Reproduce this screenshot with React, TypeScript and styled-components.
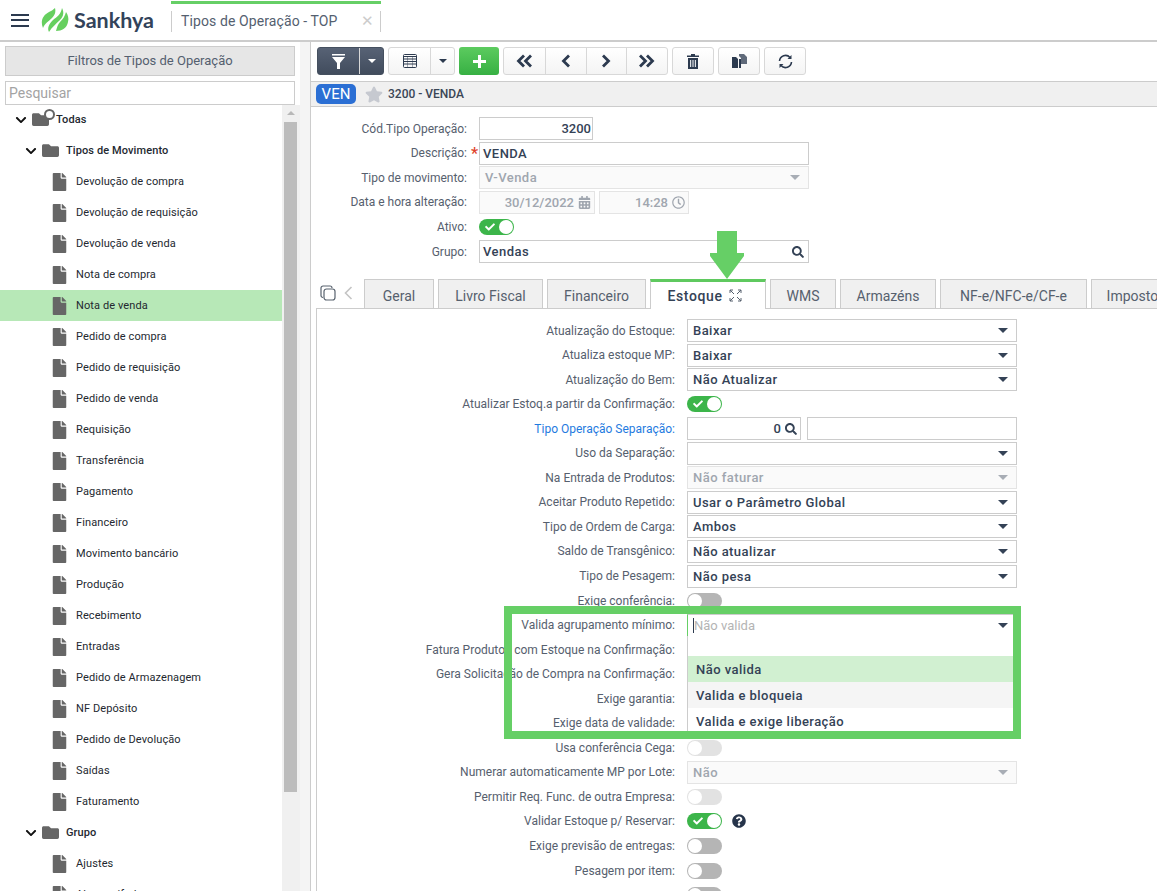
import React from "react";
import styled, { createGlobalStyle } from "styled-components";
import {
  FaCheck,
  FaChevronDown,
  FaFile,
  FaFolder,
  FaQuestionCircle,
  FaSearch,
  FaStar,
  FaCalendarAlt,
  FaRegClock,
} from "react-icons/fa";

const GlobalStyle = createGlobalStyle`
  html, body {
    margin: 0;
    padding: 0;
    height: 100%;
    overflow: hidden;
    background: #fff;
  }
  * {
    box-sizing: border-box;
  }
  body {
    font-family: Roboto, "Liberation Sans", sans-serif;
    color: #4f5a69;
  }
`;

const Page = styled.div`
  width: 1157px;
  height: 891px;
  overflow: hidden;
  display: flex;
  flex-direction: column;
`;

const TopBar = styled.header`
  height: 42px;
  flex: none;
  display: flex;
  align-items: center;
  padding-left: 11px;
  border-bottom: 2px solid #ccc;
`;

const Burger = styled.div`
  width: 18px;
  height: 13px;
  border-top: 2px solid #2c3a4f;
  border-bottom: 2px solid #2c3a4f;
  position: relative;
  &::after {
    content: "";
    position: absolute;
    left: 0;
    right: 0;
    top: 3.5px;
    height: 2px;
    background: #2c3a4f;
  }
`;

const Brand = styled.div`
  display: flex;
  align-items: center;
  margin-left: 12px;
  width: 130px;
  gap: 5px;
`;

const BrandName = styled.span`
  font-family: Lato, sans-serif;
  font-weight: 700;
  font-size: 21.5px;
  color: #33435a;
`;

const OpenTab = styled.div`
  align-self: stretch;
  width: 210px;
  margin-top: 1px;
  border-top: 3px solid #66cf66;
  display: flex;
  align-items: center;
  justify-content: space-between;
  position: relative;
  padding: 0 7px 3px 10px;
  font-size: 14px;
  color: #54606f;
  letter-spacing: 0.1px;
  &::before,
  &::after {
    content: "";
    position: absolute;
    top: 7px;
    height: 21px;
    width: 1px;
    background: #ccc;
  }
  &::before {
    left: 0;
  }
  &::after {
    right: 0;
  }
`;

const TabClose = styled.span`
  color: #ccc;
  font-size: 15px;
`;

const Body = styled.div`
  flex: 1;
  min-height: 0;
  display: flex;
`;

const Side = styled.aside`
  width: 300px;
  flex: none;
  display: flex;
  flex-direction: column;
  padding-top: 4px;
`;

const FilterHead = styled.div`
  margin: 0 5px;
  height: 30px;
  padding-bottom: 2px;
  background: #e6e6e6;
  border: 1px solid #ccc;
  display: flex;
  align-items: center;
  justify-content: center;
  font-size: 13px;
  color: #54606f;
`;

const SearchBox = styled.div`
  margin: 5px 5px 0;
  height: 24px;
  border: 1px solid #ccc;
  padding: 0 3px;
  font-size: 14px;
  line-height: 22px;
  color: #a3a3a3;
`;

const TreeWrap = styled.div`
  flex: 1;
  min-height: 0;
  display: flex;
`;

const Tree = styled.div`
  width: 282px;
  overflow: hidden;
  margin-top: -1px;
`;

const TreeRow = styled.div<{ $level: number; $active?: boolean; $strong?: boolean }>`
  height: 31px;
  display: flex;
  align-items: center;
  padding-left: ${(p) => (p.$level === 0 ? 15 : p.$level === 1 ? 25 : 52)}px;
  background: ${(p) => (p.$active ? "#b7e8b7" : "transparent")};
  font-size: 11px;
  letter-spacing: 0.1px;
  font-weight: ${(p) => (p.$strong ? 500 : 400)};
  color: #23282f;
`;

const Chevron = styled(FaChevronDown)`
  width: 12px;
  height: 12px;
  margin-right: 4px;
  color: #111;
`;

const TreeFolder = styled(FaFolder)`
  width: 19px;
  height: 17px;
  margin-right: 6px;
  color: #666;
`;

const TreeFile = styled(FaFile)`
  width: 15px;
  height: 18px;
  margin-right: 9px;
  color: #666;
`;

const FolderGear = styled.span`
  position: relative;
  display: flex;
  &::after {
    content: "";
    position: absolute;
    top: -2px;
    left: 13px;
    width: 7px;
    height: 7px;
    border-radius: 50%;
    border: 2px solid #666;
    background: #fff;
  }
`;

const Scrollbar = styled.div`
  width: 18px;
  background: #f0f0f0;
  padding: 6px 3px 0 2px;
`;

const ScrollArrow = styled.div`
  width: 0;
  margin: 0 auto;
  border-left: 4px solid transparent;
  border-right: 4px solid transparent;
  border-bottom: 4px solid #b8b8b8;
`;

const ScrollThumb = styled.div`
  height: 670px;
  margin-top: 7px;
  background: #bcbcbc;
`;

const Gutter = styled.div`
  width: 10px;
  flex: none;
  background: #f4f4f4;
`;

const Main = styled.main`
  flex: 1;
  min-width: 0;
  border-left: 1px solid #ccc;
  overflow: hidden;
  display: flex;
  flex-direction: column;
  position: relative;
`;

const Toolbar = styled.div`
  height: 40px;
  flex: none;
  display: flex;
  align-items: flex-start;
  gap: 4px;
  padding: 5px 0 0 6px;
  border-bottom: 1px solid #ccc;
`;

const BtnGroup = styled.div<{ $dark?: boolean }>`
  display: flex;
  height: 28px;
  border-radius: 3px;
  overflow: hidden;
  border: 1px solid ${(p) => (p.$dark ? "#45505f" : "#d8d8d8")};
  background: ${(p) => (p.$dark ? "linear-gradient(#576275, #414c5d)" : "linear-gradient(#fff, #f4f4f4)")};
  color: ${(p) => (p.$dark ? "#fff" : "#2c3a4f")};
`;

const Btn = styled.div<{ $w: number; $dark?: boolean }>`
  width: ${(p) => p.$w}px;
  display: flex;
  align-items: center;
  justify-content: center;
  & + & {
    border-left: 1px solid ${(p) => (p.$dark ? "#5c6778" : "#d8d8d8")};
  }
`;

const Caret = styled.span<{ $color?: string }>`
  width: 0;
  height: 0;
  border-left: 4px solid transparent;
  border-right: 4px solid transparent;
  border-top: 4px solid ${(p) => p.$color ?? "currentColor"};
`;

const AddBtn = styled.div`
  width: 40px;
  height: 28px;
  border-radius: 3px;
  background: linear-gradient(#5ccb5f, #37b043);
  color: #fff;
  display: flex;
  align-items: center;
  justify-content: center;
`;

const TitleBar = styled.div`
  height: 25px;
  flex: none;
  background: #f0f0f0;
  border-bottom: 1px solid #ccc;
  display: flex;
  align-items: center;
  padding-left: 5px;
  font-size: 12px;
  font-weight: 500;
  color: #3a4656;
`;

const Badge = styled.span`
  width: 40px;
  height: 20px;
  border-radius: 5px;
  background: #2b6fd4;
  color: #fff;
  font-size: 15px;
  font-weight: 400;
  display: flex;
  align-items: center;
  justify-content: center;
`;

const Star = styled(FaStar)`
  width: 18px;
  height: 17px;
  margin: 0 5px 0 9px;
  color: #c6c9d0;
`;

const HeadForm = styled.section`
  padding-top: 9.5px;
`;

const Row = styled.div<{ $col: number }>`
  height: 24.55px;
  display: grid;
  grid-template-columns: ${(p) => p.$col}px 1fr;
  column-gap: 12px;
  align-items: center;
`;

const Label = styled.label<{ $link?: boolean }>`
  position: relative;
  text-align: right;
  white-space: nowrap;
  font-size: 12px;
  color: ${(p) => (p.$link ? "#1f7be0" : "#56606e")};
`;

const Required = styled.span`
  position: absolute;
  right: -11px;
  top: -2px;
  color: #e0432c;
  font-size: 16px;
  font-weight: 500;
`;

const Fields = styled.div`
  display: flex;
  align-items: center;
  gap: 4px;
`;

const LookupFields = styled(Fields)`
  gap: 6px;
`;

const Field = styled.div<{ $w: number; $off?: boolean; $right?: boolean; $focus?: boolean }>`
  width: ${(p) => p.$w}px;
  height: 23px;
  flex: none;
  display: flex;
  align-items: center;
  justify-content: ${(p) => (p.$right ? "flex-end" : "space-between")};
  gap: 4px;
  padding: ${(p) => (p.$right ? "0 1px 0 4px" : "0 4px 0 3px")};
  background: ${(p) => (p.$off ? "#fafafa" : "#fff")};
  border: 1px solid ${(p) => (p.$off ? "#e4e4e4" : "#ccc")};
  border-bottom-color: ${(p) => (p.$focus ? "#66cf66" : p.$off ? "#e4e4e4" : "#ccc")};
  border-left-color: ${(p) => (p.$focus ? "#66cf66" : p.$off ? "#e4e4e4" : "#ccc")};
  font-size: 13px;
  font-weight: 500;
  letter-spacing: ${(p) => (p.$right ? 0 : 0.45)}px;
  color: ${(p) => (p.$off ? "#a0a6af" : "#344256")};
  svg {
    flex: none;
    margin-right: ${(p) => (p.$right ? 2 : 0)}px;
  }
`;

const Placeholder = styled.span`
  font-weight: 400;
  letter-spacing: 0;
  color: #b4b4b4;
  border-left: 1px solid #2c3a4f;
  margin-left: 2px;
  line-height: 15px;
`;

const SelectValue = styled.span`
  padding-left: 2px;
`;

const Arrow = styled(Caret)`
  margin-right: 4px;
  border-left-width: 5px;
  border-right-width: 5px;
  border-top-width: 5px;
`;

const ToggleBody = styled.span<{ $on?: boolean; $off?: boolean }>`
  width: 35px;
  height: 16px;
  border-radius: 8px;
  display: flex;
  align-items: center;
  justify-content: ${(p) => (p.$on ? "flex-end" : "flex-start")};
  padding-left: ${(p) => (p.$on ? 6 : 1)}px;
  padding-right: 1px;
  background: ${(p) => (p.$on ? "#3cb54a" : p.$off ? "#e2e2e2" : "#b5b5b5")};
  color: #fff;
  position: relative;
`;

const Knob = styled.span`
  width: 14px;
  height: 14px;
  border-radius: 50%;
  background: #fff;
`;

const ToggleCheck = styled(FaCheck)`
  width: 10px;
  height: 10px;
  margin-right: auto;
`;

const Help = styled(FaQuestionCircle)`
  width: 14px;
  height: 14px;
  margin-left: 6px;
  color: #26344a;
`;

const TabsRow = styled.nav`
  display: flex;
  align-items: flex-end;
  height: 30px;
  margin: 15.5px 0 0 5px;
  position: relative;
  z-index: 1;
`;

const TabTools = styled.div`
  width: 48px;
  flex: none;
  height: 29px;
  display: flex;
  align-items: center;
  gap: 8px;
  padding: 0 0 2px 4px;
  color: #59636f;
`;

const Tab = styled.div<{ $w: number; $active?: boolean }>`
  width: ${(p) => p.$w}px;
  flex: none;
  margin-right: 4px;
  height: ${(p) => (p.$active ? 30 : 29)}px;
  padding: ${(p) => (p.$active ? "0 6px 0 0" : "3px 0 0")};
  display: flex;
  align-items: center;
  justify-content: center;
  gap: 7px;
  font-size: 14px;
  white-space: nowrap;
  font-weight: ${(p) => (p.$active ? 500 : 400)};
  letter-spacing: ${(p) => (p.$active ? 0.6 : 0)}px;
  color: ${(p) => (p.$active ? "#344256" : "#56606e")};
  background: ${(p) => (p.$active ? "#fff" : "#f0f0f0")};
  border: 1px solid #ccc;
  border-bottom: none;
  border-top: ${(p) => (p.$active ? "3px solid #5fc95f" : "1px solid #ccc")};
  margin-bottom: ${(p) => (p.$active ? -1 : 0)}px;
`;

const TabPanel = styled.section`
  margin-left: 5px;
  padding-top: 9px;
  border-left: 1px solid #ccc;
  border-top: 1px solid #ccc;
  position: relative;
  flex: 1;
`;

const Frame = styled.div`
  position: absolute;
  left: 187px;
  top: 297px;
  width: 517px;
  height: 133px;
  border: 8px solid #66cf66;
  pointer-events: none;
  z-index: 3;
`;

const Dropdown = styled.ul`
  position: absolute;
  left: 370px;
  top: 327px;
  width: 330px;
  margin: 0;
  padding: 20px 0 0;
  list-style: none;
  background: #fff;
  border-left: 1px solid #ccc;
  z-index: 2;
`;

const Option = styled.li<{ $bg?: string }>`
  height: 26px;
  padding-left: 8px;
  display: flex;
  align-items: center;
  font-size: 13px;
  font-weight: 500;
  letter-spacing: 0.45px;
  color: #344256;
  background: ${(p) => p.$bg ?? "#fff"};
`;

const DownArrow = styled.svg`
  position: absolute;
  left: 399px;
  top: 189px;
  z-index: 4;
`;

const Logo = () => (
  <svg width="28" height="24" viewBox="0 0 28 24">
    <path d="M2 20C-1 13 2 7 8 4c2-1 4-2 6-4 1 4 0 7-3 10-3 3-7 5-9 10z" fill="#66cf5f" />
    <path d="M8 24c-2-4 0-8 4-12 4-3 8-6 9-12 2 4 2 8-2 12-4 4-8 7-11 12z" fill="#66cf5f" />
    <path d="M15 23c6 0 11-3 12-9 1-4 0-7-2-10-1 4-3 7-6 10-2 2-3 5-4 9z" fill="#66cf5f" />
  </svg>
);

const ExpandIcon = () => (
  <svg width="13" height="13" viewBox="0 0 13 13" fill="none" stroke="#56606e" strokeWidth="1">
    <path d="M1 4V1h3M9 1h3v3M12 9v3H9M4 12H1V9M1 1l4 4M12 1L8 5M12 12L8 8M1 12l4-4" />
  </svg>
);

const ListIcon = () => (
  <svg width="14" height="14" viewBox="0 0 14 14" fill="none" stroke="#2c3a4f">
    <rect x="0.5" y="0.5" width="13" height="13" rx="1" />
    <path d="M1 2.5h12M1 5h12M1 7.5h12M1 10h12" strokeWidth="1" />
    <path d="M4.5 3v10M9.5 3v10" strokeOpacity="0.4" />
  </svg>
);

const FunnelIcon = () => (
  <svg width="13" height="15" viewBox="0 0 13 15" fill="#fff">
    <path d="M0 0h13v1.5H0zM0 3h13L8 9v6H5V9z" />
  </svg>
);

const PlusIcon = () => (
  <svg width="13" height="13" viewBox="0 0 13 13" fill="#fff">
    <path d="M5 0h3v5h5v3H8v5H5V8H0V5h5z" />
  </svg>
);

// left / right chevrons of the record navigation, single or double
const NavIcon = ({ double, right }: { double?: boolean; right?: boolean }) => (
  <svg
    width={double ? 16 : 10}
    height="14"
    viewBox={double ? "0 0 16 14" : "0 0 10 14"}
    fill="none"
    stroke="#2c3a4f"
    strokeWidth="2.8"
    transform={right ? "scale(-1 1)" : undefined}
  >
    <path d="M8 1.5L2.5 7 8 12.5" />
    {double && <path d="M15 1.5L9.5 7l5.5 5.5" />}
  </svg>
);

const TrashIcon = () => (
  <svg width="12" height="15" viewBox="0 0 12 15">
    <path d="M4 0h4v1.5h4V3H0V1.5h4z" fill="#2c3a4f" />
    <path d="M1 4h10v11H1z" fill="#2c3a4f" />
    <path d="M3 6h1.2v7H3zM5.4 6h1.2v7H5.4zM7.8 6H9v7H7.8z" fill="#dfe2e6" />
  </svg>
);

const PagesIcon = () => (
  <svg width="15" height="14" viewBox="0 0 15 14" fill="#2c3a4f">
    <path d="M0 3h4l2 2v9H0z" />
    <path d="M7 2V0h5l3 3v7H9V4z" opacity="0.75" />
    <path d="M7 5h2v9H7z" />
  </svg>
);

const ReloadIcon = () => (
  <svg width="15" height="15" viewBox="0 0 15 15" fill="none" stroke="#2c3a4f" strokeWidth="1.6">
    <path d="M1.5 7A6 6 0 0 1 12 3.5" />
    <path d="M13.5 8A6 6 0 0 1 3 11.5" />
    <path d="M13.5 1v4h-4z" fill="#2c3a4f" stroke="none" />
    <path d="M1.5 14v-4h4z" fill="#2c3a4f" stroke="none" />
  </svg>
);

const TabCopyIcon = () => (
  <svg width="16" height="16" viewBox="0 0 16 16" fill="none" stroke="#59636f" strokeWidth="1.2">
    <path d="M3 12.5A2 2 0 0 1 1 10.5V3a2 2 0 0 1 2-2h7a2 2 0 0 1 2 2" />
    <rect x="4" y="4" width="11" height="11" rx="2.5" />
  </svg>
);

const TabBackIcon = () => (
  <svg width="9" height="14" viewBox="0 0 9 14" fill="none" stroke="#c4c4c4" strokeWidth="1.6">
    <path d="M7.5 1L1.5 7l6 6" />
  </svg>
);

const LookupIcon = () => <FaSearch size={12} color="#344256" />;

type TreeItem = { name: string; level: number; active?: boolean; strong?: boolean; gear?: boolean };

const leaves = [
  "Devolução de compra",
  "Devolução de requisição",
  "Devolução de venda",
  "Nota de compra",
  "Nota de venda",
  "Pedido de compra",
  "Pedido de requisição",
  "Pedido de venda",
  "Requisição",
  "Transferência",
  "Pagamento",
  "Financeiro",
  "Movimento bancário",
  "Produção",
  "Recebimento",
  "Entradas",
  "Pedido de Armazenagem",
  "NF Depósito",
  "Pedido de Devolução",
  "Saídas",
  "Faturamento",
];

const treeRows: TreeItem[] = [
  { name: "Todas", level: 0, strong: true, gear: true },
  { name: "Tipos de Movimento", level: 1, strong: true },
  ...leaves.map((name) => ({ name, level: 2, active: name === "Nota de venda" })),
  { name: "Grupo", level: 1, strong: true },
  { name: "Ajustes", level: 2 },
  { name: "Almoxarifado", level: 2 },
];

type Ctl =
  | { kind: "select"; value?: string; off?: boolean; focus?: boolean }
  | { kind: "toggle"; on?: boolean; off?: boolean; help?: boolean }
  | { kind: "lookup" };

const stockRows: { label: string; link?: boolean; ctl: Ctl }[] = [
  { label: "Atualização do Estoque:", ctl: { kind: "select", value: "Baixar" } },
  { label: "Atualiza estoque MP:", ctl: { kind: "select", value: "Baixar" } },
  { label: "Atualização do Bem:", ctl: { kind: "select", value: "Não Atualizar" } },
  { label: "Atualizar Estoq.a partir da Confirmação:", ctl: { kind: "toggle", on: true } },
  { label: "Tipo Operação Separação:", link: true, ctl: { kind: "lookup" } },
  { label: "Uso da Separação:", ctl: { kind: "select" } },
  { label: "Na Entrada de Produtos:", ctl: { kind: "select", value: "Não faturar", off: true } },
  { label: "Aceitar Produto Repetido:", ctl: { kind: "select", value: "Usar o Parâmetro Global" } },
  { label: "Tipo de Ordem de Carga:", ctl: { kind: "select", value: "Ambos" } },
  { label: "Saldo de Transgênico:", ctl: { kind: "select", value: "Não atualizar" } },
  { label: "Tipo de Pesagem:", ctl: { kind: "select", value: "Não pesa" } },
  { label: "Exige conferência:", ctl: { kind: "toggle" } },
  { label: "Valida agrupamento mínimo:", ctl: { kind: "select", value: "Não valida", focus: true } },
  { label: "Fatura Produtos com Estoque na Confirmação:", ctl: { kind: "toggle" } },
  { label: "Gera Solicitação de Compra na Confirmação:", ctl: { kind: "toggle" } },
  { label: "Exige garantia:", ctl: { kind: "toggle" } },
  { label: "Exige data de validade:", ctl: { kind: "toggle" } },
  { label: "Usa conferência Cega:", ctl: { kind: "toggle", off: true } },
  { label: "Numerar automaticamente MP por Lote:", ctl: { kind: "select", value: "Não", off: true } },
  { label: "Permitir Req. Func. de outra Empresa:", ctl: { kind: "toggle", off: true } },
  { label: "Validar Estoque p/ Reservar:", ctl: { kind: "toggle", on: true, help: true } },
  { label: "Exige previsão de entregas:", ctl: { kind: "toggle" } },
  { label: "Pesagem por item:", ctl: { kind: "toggle" } },
  { label: "", ctl: { kind: "toggle" } },
];

const Toggle = ({ on, off }: { on?: boolean; off?: boolean }) => (
  <ToggleBody $on={on} $off={off}>
    {on && <ToggleCheck />}
    <Knob />
  </ToggleBody>
);

const Control = ({ ctl }: { ctl: Ctl }) => {
  if (ctl.kind === "toggle") {
    return (
      <Fields>
        <Toggle on={ctl.on} off={ctl.off} />
        {ctl.help && <Help />}
      </Fields>
    );
  }
  if (ctl.kind === "lookup") {
    return (
      <LookupFields>
        <Field $w={114} $right>
          0 <LookupIcon />
        </Field>
        <Field $w={210} />
      </LookupFields>
    );
  }
  return (
    <Field $w={330} $off={ctl.off} $focus={ctl.focus}>
      {ctl.focus ? <Placeholder>{ctl.value}</Placeholder> : <SelectValue>{ctl.value}</SelectValue>}
      <Arrow $color={ctl.off ? "#a8adb5" : "#344256"} />
    </Field>
  );
};

const tabs = [
  { name: "Geral", w: 70 },
  { name: "Livro Fiscal", w: 105 },
  { name: "Financeiro", w: 99 },
  { name: "Estoque", w: 116, active: true },
  { name: "WMS", w: 66 },
  { name: "Armazéns", w: 96 },
  { name: "NF-e/NFC-e/CF-e", w: 147 },
  { name: "Impostos", w: 90 },
];

export default function App() {
  return (
    <Page>
      <GlobalStyle />
      <TopBar>
        <Burger />
        <Brand>
          <Logo />
          <BrandName>Sankhya</BrandName>
        </Brand>
        <OpenTab>
          Tipos de Operação - TOP
          <TabClose>✕</TabClose>
        </OpenTab>
      </TopBar>
      <Body>
        <Side>
          <FilterHead>Filtros de Tipos de Operação</FilterHead>
          <SearchBox>Pesquisar</SearchBox>
          <TreeWrap>
            <Tree>
              {treeRows.map((row) => (
                <TreeRow key={row.name} $level={row.level} $active={row.active} $strong={row.strong}>
                  {row.level < 2 && <Chevron />}
                  {row.level < 2 &&
                    (row.gear ? (
                      <FolderGear>
                        <TreeFolder />
                      </FolderGear>
                    ) : (
                      <TreeFolder />
                    ))}
                  {row.level === 2 && <TreeFile />}
                  {row.name}
                </TreeRow>
              ))}
            </Tree>
            <Scrollbar>
              <ScrollArrow />
              <ScrollThumb />
            </Scrollbar>
          </TreeWrap>
        </Side>
        <Gutter />
        <Main>
          <Toolbar>
            <BtnGroup $dark>
              <Btn $w={41} $dark>
                <FunnelIcon />
              </Btn>
              <Btn $w={24} $dark>
                <Caret />
              </Btn>
            </BtnGroup>
            <BtnGroup>
              <Btn $w={41}>
                <ListIcon />
              </Btn>
              <Btn $w={24}>
                <Caret />
              </Btn>
            </BtnGroup>
            <AddBtn>
              <PlusIcon />
            </AddBtn>
            <BtnGroup>
              <Btn $w={40.75}>
                <NavIcon double />
              </Btn>
              <Btn $w={40.75}>
                <NavIcon />
              </Btn>
              <Btn $w={40.75}>
                <NavIcon right />
              </Btn>
              <Btn $w={40.75}>
                <NavIcon double right />
              </Btn>
            </BtnGroup>
            <BtnGroup>
              <Btn $w={40}>
                <TrashIcon />
              </Btn>
            </BtnGroup>
            <BtnGroup>
              <Btn $w={40}>
                <PagesIcon />
              </Btn>
            </BtnGroup>
            <BtnGroup>
              <Btn $w={40}>
                <ReloadIcon />
              </Btn>
            </BtnGroup>
          </Toolbar>
          <TitleBar>
            <Badge>VEN</Badge>
            <Star />
            3200 - VENDA
          </TitleBar>
          <HeadForm>
            <Row $col={156}>
              <Label>Cód.Tipo Operação:</Label>
              <Field $w={114} $right>
                3200
              </Field>
            </Row>
            <Row $col={156}>
              <Label>
                Descrição:<Required>*</Required>
              </Label>
              <Field $w={330}>VENDA</Field>
            </Row>
            <Row $col={156}>
              <Label>Tipo de movimento:</Label>
              <Field $w={330} $off>
                <SelectValue>V-Venda</SelectValue>
                <Arrow $color="#a8adb5" />
              </Field>
            </Row>
            <Row $col={156}>
              <Label>Data e hora alteração:</Label>
              <Fields>
                <Field $w={116} $off $right>
                  30/12/2022 <FaCalendarAlt size={13} />
                </Field>
                <Field $w={90} $off $right>
                  14:28 <FaRegClock size={13} />
                </Field>
              </Fields>
            </Row>
            <Row $col={156}>
              <Label>Ativo:</Label>
              <Toggle on />
            </Row>
            <Row $col={156}>
              <Label>Grupo:</Label>
              <Field $w={330}>
                Vendas <LookupIcon />
              </Field>
            </Row>
          </HeadForm>
          <TabsRow>
            <TabTools>
              <TabCopyIcon />
              <TabBackIcon />
            </TabTools>
            {tabs.map((t) => (
              <Tab key={t.name} $w={t.w} $active={t.active}>
                {t.name}
                {t.active && <ExpandIcon />}
              </Tab>
            ))}
          </TabsRow>
          <TabPanel>
            {stockRows.map((r) => (
              <Row $col={358} key={r.label}>
                <Label $link={r.link}>{r.label}</Label>
                <Control ctl={r.ctl} />
              </Row>
            ))}
            <Dropdown>
              <Option $bg="#d1f0d1">Não valida</Option>
              <Option $bg="#f5f5f5">Valida e bloqueia</Option>
              <Option>Valida e exige liberação</Option>
            </Dropdown>
            <Frame />
          </TabPanel>
          <DownArrow width="34" height="48" viewBox="0 0 34 48">
            <path d="M7 0h20v22h7v3L17 48 0 25v-3h7z" fill="#66cf66" />
          </DownArrow>
        </Main>
      </Body>
    </Page>
  );
}
